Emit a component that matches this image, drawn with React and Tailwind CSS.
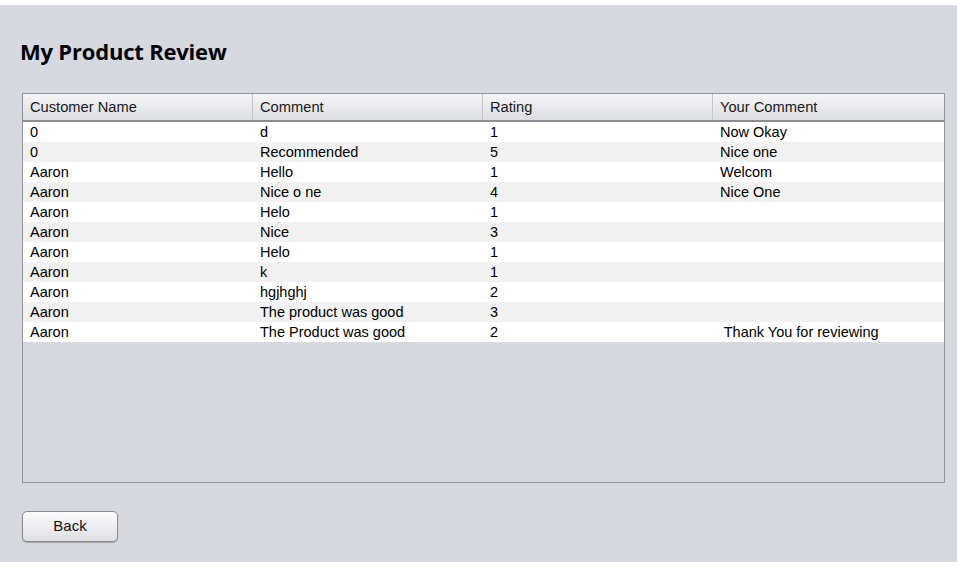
const rows = [
  ["0", "d", "1", "Now Okay"],
  ["0", "Recommended", "5", "Nice one"],
  ["Aaron", "Hello", "1", "Welcom"],
  ["Aaron", "Nice o ne", "4", "Nice One"],
  ["Aaron", "Helo", "1", ""],
  ["Aaron", "Nice", "3", ""],
  ["Aaron", "Helo", "1", ""],
  ["Aaron", "k", "1", ""],
  ["Aaron", "hgjhghj", "2", ""],
  ["Aaron", "The product was good", "3", ""],
  ["Aaron", "The Product was good", "2", " Thank You for reviewing"],
];

const headers = ["Customer Name", "Comment", "Rating", "Your Comment"];

export default function App() {
  return (
    <div className="w-[957px] h-[562px] bg-white pt-[5px] overflow-hidden">
      <div className="h-[557px] bg-[#d6d9e0] px-[22px] pt-[33px] font-['Liberation_Sans',Arial,sans-serif] text-black">
        <h1 className="ml-[-2px] text-[22px] leading-[26px] font-bold font-['Open_Sans','DejaVu_Sans',sans-serif] tracking-[-0.2px]">
          My Product Review
        </h1>

        <div className="mt-[29px] w-[923px] h-[390px] border border-[#8f949c] bg-[#d6d9e0]">
          <div className="flex h-[28px] bg-gradient-to-b from-[#f6f6f8] to-[#dcdde2] border-b-2 border-[#8a8d93]">
            {headers.map((h, i) => (
              <div
                key={h}
                className={`w-[230px] pl-[7px] text-[14.7px] leading-[26px] text-[#1a1a1a] ${
                  i < 3 ? "border-r border-[#c4c6cb]" : ""
                }`}
              >
                {h}
              </div>
            ))}
          </div>

          {rows.map((r, idx) => (
            <div
              key={idx}
              className={`flex h-[20px] ${idx % 2 === 0 ? "bg-white" : "bg-[#f2f2f2]"}`}
            >
              {r.map((c, j) => (
                <div
                  key={j}
                  className="w-[230px] pl-[7px] text-[14.5px] leading-[20px] whitespace-pre"
                >
                  {c}
                </div>
              ))}
            </div>
          ))}
        </div>

        <button className="mt-[28px] w-[96px] h-[31px] rounded-[5px] border border-[#8a8d93] bg-gradient-to-b from-[#fbfbfc] to-[#dfe0e4] shadow-[0_1px_1px_rgba(0,0,0,0.25)] text-[15px] text-[#111]">
          Back
        </button>
      </div>
    </div>
  );
}
